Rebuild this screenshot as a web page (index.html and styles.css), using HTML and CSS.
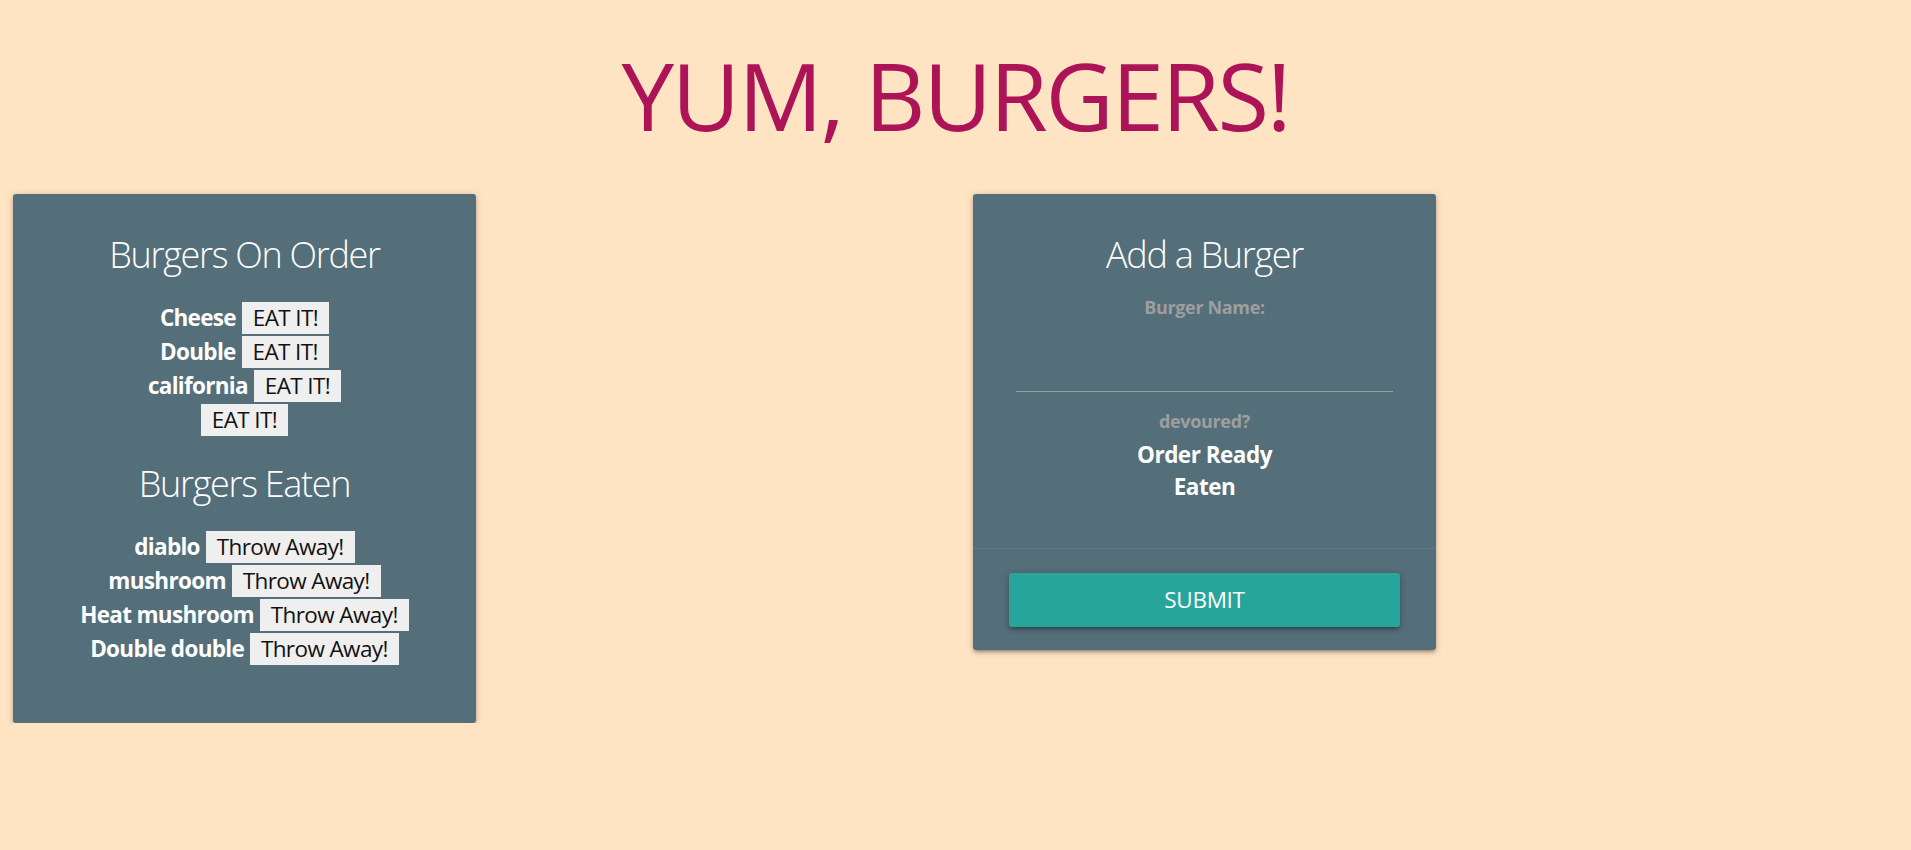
FILE: index.html
```html
<!DOCTYPE html>
<html lang="en">
<head>
<meta charset="utf-8">
<title>Yum, Burgers!</title>
<link rel="stylesheet" href="styles.css">
</head>
<body>
<h1 class="title">YUM, BURGERS!</h1>
<main class="board">
  <section class="card">
    <div class="card-content">
      <h5 class="card-heading">Burgers On Order</h5>
      <div class="list">
        <div class="item"><span class="name">Cheese</span> <button class="act">EAT IT!</button></div>
        <div class="item"><span class="name">Double</span> <button class="act">EAT IT!</button></div>
        <div class="item"><span class="name">california</span> <button class="act">EAT IT!</button></div>
        <div class="item"><button class="act">EAT IT!</button></div>
      </div>
      <h5 class="card-heading second">Burgers Eaten</h5>
      <div class="list">
        <div class="item"><span class="name">diablo</span> <button class="act">Throw Away!</button></div>
        <div class="item"><span class="name">mushroom</span> <button class="act">Throw Away!</button></div>
        <div class="item"><span class="name">Heat mushroom</span> <button class="act">Throw Away!</button></div>
        <div class="item"><span class="name">Double double</span> <button class="act">Throw Away!</button></div>
      </div>
    </div>
  </section>
  <section class="card">
    <div class="card-content form-content">
      <h5 class="card-heading">Add a Burger</h5>
      <label class="field-label" for="burger">Burger Name:</label>
      <div class="input-wrap"><input id="burger" class="text-input" type="text"></div>
      <div class="field-label devoured">devoured?</div>
      <div class="option first">Order Ready</div>
      <div class="option">Eaten</div>
    </div>
    <div class="card-action">
      <button class="submit">SUBMIT</button>
    </div>
  </section>
</main>
</body>
</html>
```
FILE: styles.css
```css
html, body {
  margin: 0;
  padding: 0;
}
body {
  background: #ffe4c4;
  font-family: "Open Sans", "Noto Sans", sans-serif;
  color: #fff;
}
.title {
  margin: 43.5px 0 0;
  text-align: center;
  font-size: 94px;
  line-height: 103.4px;
  font-weight: 400;
  letter-spacing: -2.2px;
  color: #ad1457;
}
.board {
  display: flex;
  align-items: flex-start;
  gap: 497px;
  padding-left: 13px;
  margin-top: 47px;
}
.card {
  width: 463px;
  background: #546e7a;
  border-radius: 3px;
  box-shadow: 0 3px 3px 0 rgba(0,0,0,.14), 0 4.5px 1.5px -3px rgba(0,0,0,.12), 0 1.5px 7.5px 0 rgba(0,0,0,.2);
}
.card-content {
  padding: 40.7px 0 57px;
  text-align: center;
}
.card-heading {
  margin: 0 0 25.7px;
  font-size: 36px;
  line-height: 40.6px;
  font-weight: 300;
  letter-spacing: -1.3px;
}
.card-heading.second {
  margin-top: 27px;
}
.item {
  font-size: 22.5px;
  line-height: 34px;
}
.name {
  font-weight: 700;
  letter-spacing: -0.7px;
}
.act {
  display: inline-block;
  height: 32px;
  margin: 0;
  padding: 0 11px;
  border: none;
  border-radius: 0;
  background: #efefef;
  color: #111;
  font-family: inherit;
  font-size: 22.5px;
  line-height: 32px;
  letter-spacing: -0.6px;
}
.form-content {
  padding-bottom: 44px;
  border-bottom: 1px solid rgba(160,160,160,0.2);
}
.form-content .card-heading {
  margin-bottom: 19.2px;
}
.field-label {
  display: block;
  font-size: 18px;
  line-height: 27px;
  font-weight: 700;
  letter-spacing: -0.35px;
  color: #9e9e9e;
}
.input-wrap {
  margin: 1.5px 43px 0;
}
.text-input {
  display: block;
  box-sizing: border-box;
  width: 100%;
  height: 69px;
  margin: 0;
  padding: 0;
  border: none;
  border-bottom: 1px solid #9e9e9e;
  background: transparent;
  outline: none;
  color: #fff;
  font-family: inherit;
  font-size: 22.5px;
}
.devoured {
  margin-top: 16.5px;
}
.option {
  font-size: 22.5px;
  line-height: 32.6px;
  font-weight: 700;
  letter-spacing: -0.5px;
}
.option.first {
  margin-top: 3.3px;
}
.card-action {
  padding: 24px 36px 23px;
}
.submit {
  display: block;
  width: 100%;
  height: 54px;
  margin: 0;
  padding: 0;
  border: none;
  border-radius: 3px;
  background: #26a69a;
  color: #fff;
  font-family: inherit;
  font-size: 22.5px;
  line-height: 54px;
  letter-spacing: -0.3px;
  box-shadow: 0 3px 3px 0 rgba(0,0,0,.14), 0 4.5px 1.5px -3px rgba(0,0,0,.12), 0 1.5px 7.5px 0 rgba(0,0,0,.2);
}
```
